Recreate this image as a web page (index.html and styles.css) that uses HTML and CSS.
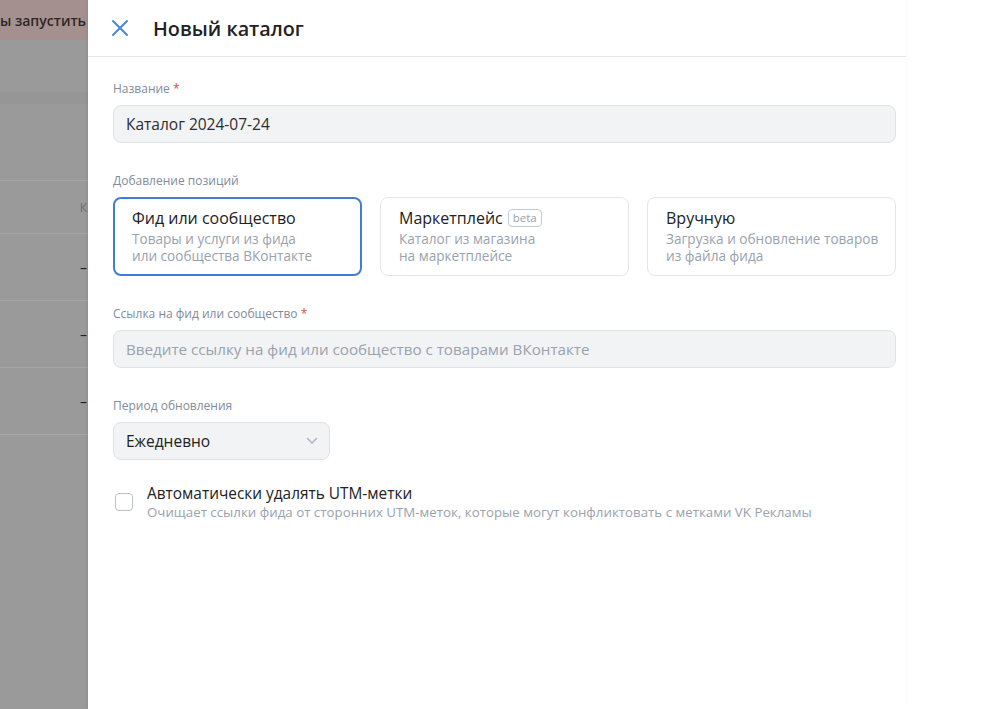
FILE: index.html
```html
<!DOCTYPE html>
<html lang="ru">
<head>
    <meta charset="UTF-8">
    <meta name="viewport" content="width=device-width, initial-scale=1.0">
    <title>Новый каталог</title>
    <link rel="stylesheet" href="styles.css">
</head>
<body>

    <div class="backdrop">
        <div class="bd-top"><span>Чтобы запустить</span></div>
        <div class="bd-gap"></div>
        <div class="bd-band"></div>
        <div class="bd-space"></div>
        <div class="bd-row bd-head"><span class="bd-k">К</span></div>
        <div class="bd-row"><span class="bd-dash">–</span></div>
        <div class="bd-row"><span class="bd-dash">–</span></div>
        <div class="bd-row"><span class="bd-dash">–</span></div>
    </div>

    <div class="panel">
        <div class="panel-header">
            <button class="close" aria-label="Закрыть">
                <svg width="18" height="18" viewBox="0 0 18 18">
                    <path d="M2 2 L16 16 M16 2 L2 16" stroke="currentColor" stroke-width="2" stroke-linecap="round"/>
                </svg>
            </button>
            <h1>Новый каталог</h1>
        </div>

        <div class="panel-body">
            <div class="field">
                <div class="label">Название <span class="req">*</span></div>
                <input class="input" type="text" value="Каталог 2024-07-24">
            </div>

            <div class="field">
                <div class="label">Добавление позиций</div>
                <div class="sources">
                    <div class="source active">
                        <div class="source-title">Фид или сообщество</div>
                        <div class="source-text">Товары и услуги из фида<br>или сообщества ВКонтакте</div>
                    </div>
                    <div class="source">
                        <div class="source-title">Маркетплейс <span class="badge">beta</span></div>
                        <div class="source-text">Каталог из магазина<br>на маркетплейсе</div>
                    </div>
                    <div class="source">
                        <div class="source-title">Вручную</div>
                        <div class="source-text">Загрузка и обновление товаров<br>из файла фида</div>
                    </div>
                </div>
            </div>

            <div class="field">
                <div class="label">Ссылка на фид или сообщество <span class="req">*</span></div>
                <input class="input" type="text" placeholder="Введите ссылку на фид или сообщество с товарами ВКонтакте">
            </div>

            <div class="field">
                <div class="label">Период обновления</div>
                <div class="select">
                    <span>Ежедневно</span>
                    <svg width="12" height="8" viewBox="0 0 12 8">
                        <path d="M1.5 1.5 L6 6 L10.5 1.5" fill="none" stroke="currentColor" stroke-width="1.4" stroke-linecap="round" stroke-linejoin="round"/>
                    </svg>
                </div>
            </div>

            <label class="check">
                <span class="check-box"></span>
                <span class="check-body">
                    <span class="check-title">Автоматически удалять UTM-метки</span>
                    <span class="check-text">Очищает ссылки фида от сторонних UTM-меток, которые могут конфликтовать с метками VK Рекламы</span>
                </span>
            </label>
        </div>
    </div>

</body>
</html>
```

FILE: styles.css
```css
body {
    font-family: "Open Sans", "Noto Sans", sans-serif;
    margin: 0;
    height: 709px;
    display: flex;
    background-color: #fff;
    color: #2c2d2e;
    overflow: hidden;
}

/* затемнённая страница под панелью */
.backdrop {
    width: 88px;
    flex-shrink: 0;
    background-color: #9a9a9a;
    display: flex;
    flex-direction: column;
    overflow: hidden;
}
.bd-top {
    height: 40px;
    background-color: #a4918f;
    display: flex;
    justify-content: flex-end;
    align-items: center;
    padding-right: 2px;
    font-size: 14px;
    font-weight: 600;
    color: #2e2626;
    white-space: nowrap;
}
.bd-gap {
    height: 52px;
}
.bd-band {
    height: 12px;
    background-color: #969696;
}
.bd-space {
    height: 76px;
}
.bd-row {
    height: 66px;
    border-top: 1px solid #a6a6a6;
    display: flex;
    justify-content: flex-end;
    align-items: center;
}
.bd-row:last-child {
    border-bottom: 1px solid #a6a6a6;
}
.bd-head {
    height: 52px;
}
.bd-k {
    font-size: 12px;
    color: #6f6f6f;
    margin-right: 1px;
}
.bd-dash {
    font-size: 14px;
    color: #1e1e1e;
    margin-right: 1px;
}

/* панель */
.panel {
    width: 818px;
    flex-shrink: 0;
    background-color: #fff;
    box-shadow: -1px 0 3px rgba(0, 0, 0, 0.08);
}
.panel-header {
    height: 56px;
    border-bottom: 1px solid #e7e8ec;
    display: flex;
    align-items: center;
    padding-left: 20px;
    gap: 21px;
}
.close {
    width: 24px;
    height: 24px;
    border: none;
    padding: 0;
    background: none;
    color: #4a86d9;
    display: flex;
    align-items: center;
    justify-content: center;
    cursor: pointer;
}
.panel-header h1 {
    margin: 0;
    font-size: 19.8px;
    font-weight: 600;
    color: #222;
}

.panel-body {
    padding: 24px 10px 0 25px;
}
.field {
    margin-bottom: 30px;
}
.label {
    font-size: 12px;
    line-height: 16px;
    color: #818c99;
    margin-bottom: 8px;
}
.req {
    color: #e64646;
}
.input {
    display: block;
    box-sizing: border-box;
    width: 100%;
    height: 38px;
    padding: 0 12px;
    border: 1px solid #dfe2e7;
    border-radius: 8px;
    background-color: #f2f3f5;
    font-family: inherit;
    font-size: 15.5px;
    color: #2c2d2e;
    outline: none;
}
.input::placeholder {
    color: #99a2ad;
    font-size: 15.2px;
}

.sources {
    display: grid;
    grid-template-columns: repeat(3, 1fr);
    gap: 18px;
}
.source {
    box-sizing: border-box;
    height: 79px;
    padding: 9px 10px 9px 18px;
    border: 1px solid #e3e6ea;
    border-radius: 8px;
    white-space: nowrap;
}
.source.active {
    border: 2px solid #3f7fd3;
    padding: 8px 9px 8px 17px;
}
.source-title {
    font-size: 16px;
    line-height: 22px;
    font-weight: 500;
    color: #222;
    display: flex;
    align-items: center;
    gap: 5px;
}
.source-text {
    font-size: 13.6px;
    line-height: 17px;
    color: #99a2ad;
    margin-top: 1px;
}
.badge {
    font-size: 11.5px;
    line-height: 16px;
    font-weight: 400;
    color: #99a2ad;
    border: 1px solid #c5cad1;
    border-radius: 4px;
    padding: 0 4px;
}

.select {
    box-sizing: border-box;
    width: 217px;
    height: 38px;
    padding: 0 11px 0 12px;
    border: 1px solid #dfe2e7;
    border-radius: 8px;
    background-color: #f2f3f5;
    display: flex;
    align-items: center;
    justify-content: space-between;
    font-size: 15.5px;
    color: #222;
}
.select svg {
    color: #a7b0bb;
}

.check {
    display: flex;
    align-items: flex-start;
    gap: 14px;
    margin-top: -6px;
    padding-left: 2px;
    cursor: pointer;
}
.check-box {
    box-sizing: border-box;
    width: 18px;
    height: 18px;
    margin-top: 9px;
    border: 1.5px solid #b8c1cc;
    border-radius: 4px;
    flex-shrink: 0;
}
.check-body {
    display: flex;
    flex-direction: column;
}
.check-title {
    font-size: 15.4px;
    line-height: 20px;
    color: #222;
}
.check-text {
    font-size: 13.3px;
    line-height: 17px;
    color: #99a2ad;
}
```
